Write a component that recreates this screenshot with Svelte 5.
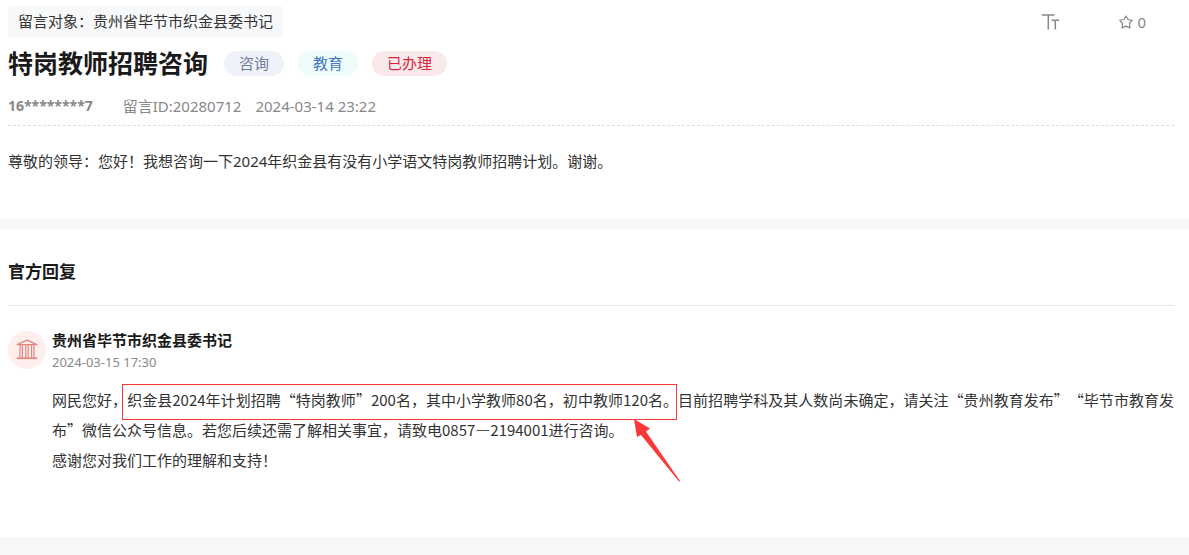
<script>
  const tags = [
    { label: '咨询', kind: 'type' },
    { label: '教育', kind: 'field' },
    { label: '已办理', kind: 'status' }
  ];
  let favourites = $state(0);
  let starred = $state(false);

  function toggleStar() {
    starred = !starred;
    favourites += starred ? 1 : -1;
  }
</script>

<main lang="zh-CN">
  <section class="message">
    <div class="top">
      <p class="target">留言对象：贵州省毕节市织金县委书记</p>
      <div class="tools">
        <button type="button" class="tool" aria-label="字号">
          <svg width="18" height="16" viewBox="0 0 18 16" fill="none" stroke="currentColor" stroke-width="1.5">
            <path d="M0 1H12.5M6.3 1V15.5M9.5 6.2H17.2M13.3 6.2V15.5" />
          </svg>
        </button>
        <button type="button" class="tool" aria-label="收藏" aria-pressed={starred} onclick={toggleStar}>
          <svg width="14" height="14" viewBox="0 0 14 14" fill="none" stroke="currentColor" stroke-width="1.2" stroke-linejoin="round">
            <path d="M7 1L9 4.5L13.2 5.3L10.4 8.5L11 12.9L7 11.1L3 12.9L3.6 8.5L0.8 5.3L5 4.5Z" />
          </svg>
          <span>{favourites}</span>
        </button>
      </div>
    </div>

    <div class="heading">
      <h1>特岗教师招聘咨询</h1>
      <ul class="tags">
        {#each tags as tag}
          <li class={tag.kind}>{tag.label}</li>
        {/each}
      </ul>
    </div>

    <div class="meta">
      <strong>16********7</strong>
      <span class="id">留言ID:20280712</span>
      <time>2024-03-14 23:22</time>
    </div>

    <p class="question">尊敬的领导：您好！我想咨询一下2024年织金县有没有小学语文特岗教师招聘计划。谢谢。</p>
  </section>

  <section class="replies">
    <h2>官方回复</h2>
    <article>
      <div class="avatar">
        <svg width="22" height="22" viewBox="0 0 22 22" fill="none" stroke="#e28580" stroke-width="1.4">
          <path d="M1.2 5.6L11 1.2L20.8 5.6Z" stroke-linejoin="round" />
          <path d="M4 6V18.5M6.4 6V18.5M9.8 6V18.5M12.2 6V18.5M15.6 6V18.5M18 6V18.5" stroke-width="1.2" />
          <path d="M0.8 19.2H21.2" stroke-width="1.8" />
        </svg>
      </div>
      <div class="reply">
        <h3>贵州省毕节市织金县委书记</h3>
        <time>2024-03-15 17:30</time>
        <div class="body">
          <p>网民您好，<span class="marked">织金县2024年计划招聘“特岗教师”200名，其中小学教师80名，初中教师120名。<span class="frame"><svg class="arrow" width="48" height="64" viewBox="0 0 48 64" aria-hidden="true"><path d="M1 0L17 9.5L13 12.5L47 62L46 62.5L8 16L4 18Z" fill="#fb3838" /></svg></span></span>目前招聘学科及其人数尚未确定，请关注“贵州教育发布”“毕节市教育发布”微信公众号信息。若您后续还需了解相关事宜，请致电0857—2194001进行咨询。</p>
          <p>感谢您对我们工作的理解和支持！</p>
        </div>
      </div>
    </article>
  </section>
</main>

<style>
  :global(body) {
    background: #f7f8fa;
  }
  main {
    font-family: "Noto Sans", "Noto Sans CJK SC", sans-serif;
    font-size: 15px;
    line-height: 30px;
    color: #333;
  }
  h1, h2, h3, p, ul {
    margin: 0;
    padding: 0;
  }
  section {
    background: #fff;
    padding: 0 15px 0 8px;
  }
  .message {
    padding-top: 6px;
    padding-bottom: 43px;
  }
  .top {
    display: flex;
    justify-content: space-between;
    align-items: center;
  }
  .target {
    padding: 0 10px;
    background: #f7f8fa;
    border-radius: 2px;
    line-height: 31px;
  }
  .tools {
    display: flex;
    gap: 59px;
    padding: 1px 28px 0 0;
  }
  .tool {
    display: flex;
    align-items: center;
    gap: 4px;
    padding: 0;
    border: 0;
    background: none;
    font: inherit;
    color: #888;
    cursor: pointer;
  }
  .heading {
    display: flex;
    align-items: center;
    gap: 16px;
    margin-top: 6px;
  }
  h1 {
    font-size: 25px;
    line-height: 40px;
    color: #1a1a1a;
  }
  .tags {
    display: flex;
    gap: 14px;
    list-style: none;
  }
  .tags li {
    padding: 0 15px;
    border-radius: 13px;
    line-height: 25px;
  }
  .type {
    background: #eff3f9;
    color: #6b7f99;
  }
  .field {
    background: #edfcfb;
    color: #4274c4;
  }
  .status {
    background: #fae9ea;
    color: #d7263a;
  }
  .meta {
    display: flex;
    padding: 8px 0 4px;
    border-bottom: 1px dashed #ddd;
    color: #888;
  }
  .meta strong {
    font-size: 14px;
  }
  .id {
    margin: 0 14px 0 30px;
  }
  .question {
    margin-top: 20px;
  }
  .replies {
    margin-top: 10px;
    padding-bottom: 62px;
  }
  h2 {
    padding: 28px 0 18px;
    border-bottom: 1px solid #e6e6e6;
    font-size: 17px;
    color: #1a1a1a;
  }
  article {
    display: flex;
    gap: 6px;
    padding-top: 25px;
  }
  .avatar {
    display: flex;
    flex: none;
    align-items: center;
    justify-content: center;
    width: 38px;
    height: 38px;
    border-radius: 50%;
    background: #feeeed;
  }
  .reply {
    flex: 1;
    min-width: 0;
  }
  h3 {
    font-size: 15px;
    line-height: 18px;
    color: #1a1a1a;
  }
  .reply time {
    display: block;
    font-size: 13px;
    line-height: 26px;
    color: #888;
  }
  .body {
    padding-top: 10px;
    font-family: "Noto Sans CJK SC", sans-serif;
    text-align: justify;
    text-spacing-trim: space-all;
  }
  .marked {
    position: relative;
  }
  .frame {
    position: absolute;
    inset: -5px 1px -10px -5px;
    border: 1px solid #fb3838;
  }
  .arrow {
    position: absolute;
    top: 100%;
    right: -5px;
  }
</style>
